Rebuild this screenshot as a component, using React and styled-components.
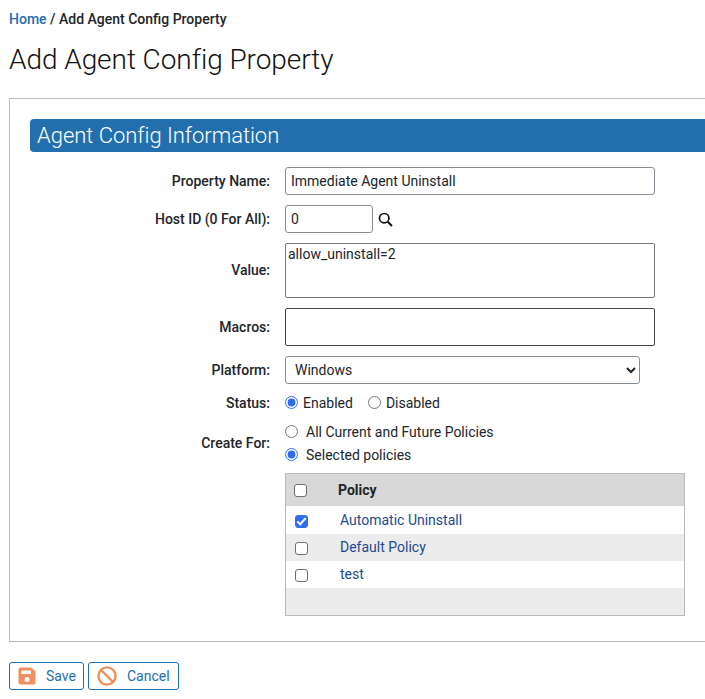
import React from "react";
import styled, { createGlobalStyle } from "styled-components";

const GlobalStyle = createGlobalStyle`
  html, body {
    margin: 0;
    padding: 0;
    overflow: hidden;
    background: #fff;
    color: #212529;
    font-family: Roboto, "Liberation Sans", sans-serif;
    font-size: 14px;
  }
`;

const Page = styled.div`
  width: 800px;
  height: 699px;
  padding: 0 0 0 9px;
  box-sizing: border-box;
`;

const Breadcrumb = styled.div`
  height: 19px;
  padding-top: 10px;
  line-height: 19px;
  font-size: 14px;
  font-weight: 500;
  color: #212529;
`;

const Crumb = styled.a`
  color: #236fad;
`;

const Title = styled.h1`
  margin: 0;
  padding-top: 11px;
  height: 40px;
  line-height: 40px;
  font-size: 28px;
  font-weight: 300;
  color: #111;
  letter-spacing: -0.06px;
`;

const Panel = styled.div`
  margin-top: 18px;
  height: 544px;
  box-sizing: border-box;
  border: 1px solid #bbb;
  padding: 20px 0 0 20px;
`;

const SectionHeader = styled.div`
  height: 33px;
  line-height: 33px;
  padding-left: 7px;
  background: #236fad;
  border-radius: 4px 0 0 4px;
  color: #fff;
  font-size: 22px;
  font-weight: 300;
  letter-spacing: -0.04px;
`;

const Row = styled.div`
  display: grid;
  grid-template-columns: 240px 1fr;
  column-gap: 15px;
  align-items: center;
  margin-top: ${(props) => props.$top || 10}px;
`;

const Label = styled.label`
  text-align: right;
  font-weight: 500;
  font-size: 14px;
  color: #212529;
  padding-bottom: ${(props) => props.$nudge || 0}px;
`;

const TextInput = styled.input`
  display: block;
  box-sizing: border-box;
  width: ${(props) => props.$width || 370}px;
  height: 28px;
  padding: 0 5px;
  border: 1px solid #868e96;
  border-radius: 3px;
  background: #fff;
  color: #212529;
  font: 400 14px Roboto, sans-serif;
`;

const InlineField = styled.div`
  display: flex;
  align-items: center;
  gap: 5px;
`;

const TextBox = styled.textarea`
  display: block;
  box-sizing: border-box;
  width: 370px;
  height: ${(props) => props.$height}px;
  padding: 2px;
  border: 1px solid ${(props) => props.$border};
  border-radius: 2px;
  resize: none;
  color: #212529;
  font: 400 14px/16px Roboto, sans-serif;
`;

const Select = styled.select`
  display: block;
  box-sizing: border-box;
  width: 355px;
  height: 28px;
  padding: 0 5px;
  border: 1px solid #868e96;
  border-radius: 3px;
  background-color: #fff;
  color: #212529;
  font: 400 14px Roboto, sans-serif;
`;

const RadioLine = styled.div`
  display: flex;
  align-items: center;
  height: 23px;
`;

const Radio = styled.input.attrs({ type: "radio" })`
  margin: 0 ${(props) => props.$gap || 5}px 0 0;
  width: 13px;
  height: 13px;
  accent-color: #2f6fed;
`;

const RadioText = styled.span`
  margin-right: ${(props) => props.$right || 0}px;
  font-size: 14px;
  color: #212529;
`;

const PolicyTable = styled.div`
  margin: 7px 0 0 255px;
  box-sizing: border-box;
  width: 400px;
  height: 143px;
  border: 1px solid #bbb;
  background: #ececec;
`;

const TableHead = styled.div`
  display: flex;
  align-items: center;
  height: 32px;
  padding-left: 8px;
  border-bottom: 1px solid #fff;
  background: #d8d8d8;
  font-weight: 700;
  font-size: 14px;
  color: #212529;
`;

const TableRow = styled.div`
  display: flex;
  align-items: center;
  height: 27px;
  padding-left: 9px;
  background: ${(props) => (props.$alt ? "#ececec" : "#fff")};
`;

const Check = styled.input.attrs({ type: "checkbox" })`
  appearance: none;
  position: relative;
  box-sizing: border-box;
  margin: 1px ${(props) => props.$gap}px 0 0;
  width: 13px;
  height: 13px;
  border: 1px solid #6f6f6f;
  border-radius: 3px;
  background: #fff;

  &:checked {
    border-color: #2f6fed;
    background: #2f6fed;
  }

  &:checked::after {
    content: "";
    position: absolute;
    left: 3px;
    top: 0;
    width: 3px;
    height: 7px;
    border: solid #fff;
    border-width: 0 2px 2px 0;
    transform: rotate(42deg);
  }
`;

const PolicyLink = styled.a`
  padding-bottom: 2px;
  color: #1d4a8c;
  font-size: 14px;
`;

const Actions = styled.div`
  display: flex;
  gap: 4px;
  margin-top: 20px;
`;

const Button = styled.button`
  display: flex;
  align-items: center;
  box-sizing: border-box;
  height: 28px;
  width: ${(props) => props.$width}px;
  padding: 0 0 0 ${(props) => props.$left}px;
  gap: ${(props) => props.$gap}px;
  border: 1px solid #236fad;
  border-radius: 3px;
  background: #fff;
  color: #236fad;
  font: 400 14px Roboto, sans-serif;
`;

const SearchIcon = () => (
  <svg width="15" height="15" viewBox="0 0 15 15" fill="none" stroke="#111" strokeWidth="1.7">
    <circle cx="6.2" cy="6.2" r="4.7" />
    <path d="M9.7 9.7 L14 14" strokeWidth="2" />
  </svg>
);

const SaveIcon = () => (
  <svg width="18" height="18" viewBox="0 0 18 18">
    <path
      fill="#f0905f"
      fillRule="evenodd"
      d="M2.5 0.5 H13.5 L17.5 4.5 V15.5 A2 2 0 0 1 15.5 17.5 H2.5 A2 2 0 0 1 0.5 15.5 V2.5 A2 2 0 0 1 2.5 0.5 Z M3.5 3.5 V7 H13 V3.5 Z M9 10 A2.5 2.5 0 1 0 9 15 A2.5 2.5 0 1 0 9 10 Z"
    />
  </svg>
);

const CancelIcon = () => (
  <svg width="20" height="20" viewBox="0 0 20 20" fill="none" stroke="#f0905f" strokeWidth="2.4">
    <circle cx="10" cy="10" r="8.6" />
    <path d="M4 4 L16 16" />
  </svg>
);

const policies = [
  { name: "Automatic Uninstall", checked: true },
  { name: "Default Policy", alt: true },
  { name: "test" },
];

const App = () => (
  <Page>
    <GlobalStyle />
    <Breadcrumb>
      <Crumb>Home</Crumb> / Add Agent Config Property
    </Breadcrumb>
    <Title>Add Agent Config Property</Title>
    <Panel>
      <SectionHeader>Agent Config Information</SectionHeader>
      <Row $top={15}>
        <Label>Property Name:</Label>
        <TextInput defaultValue="Immediate Agent Uninstall" />
      </Row>
      <Row>
        <Label>Host ID (0 For All):</Label>
        <InlineField>
          <TextInput $width={88} defaultValue="0" />
          <SearchIcon />
        </InlineField>
      </Row>
      <Row>
        <Label $nudge={2}>Value:</Label>
        <TextBox $height={55} $border="#767676" defaultValue="allow_uninstall=2" />
      </Row>
      <Row>
        <Label>Macros:</Label>
        <TextBox $height={38} $border="#444" />
      </Row>
      <Row>
        <Label>Platform:</Label>
        <Select defaultValue="Windows">
          <option>Windows</option>
        </Select>
      </Row>
      <Row $top={7}>
        <Label>Status:</Label>
        <RadioLine>
          <Radio name="status" defaultChecked />
          <RadioText $right={15}>Enabled</RadioText>
          <Radio name="status" />
          <RadioText>Disabled</RadioText>
        </RadioLine>
      </Row>
      <Row $top={6}>
        <Label>Create For:</Label>
        <div>
          <RadioLine>
            <Radio name="scope" $gap={8} />
            <RadioText>All Current and Future Policies</RadioText>
          </RadioLine>
          <RadioLine>
            <Radio name="scope" $gap={8} defaultChecked />
            <RadioText>Selected policies</RadioText>
          </RadioLine>
        </div>
      </Row>
      <PolicyTable>
        <TableHead>
          <Check $gap={31} />
          Policy
        </TableHead>
        {policies.map((policy) => (
          <TableRow key={policy.name} $alt={policy.alt}>
            <Check $gap={32} defaultChecked={policy.checked} />
            <PolicyLink>{policy.name}</PolicyLink>
          </TableRow>
        ))}
      </PolicyTable>
    </Panel>
    <Actions>
      <Button $width={75} $left={8} $gap={10}>
        <SaveIcon />
        Save
      </Button>
      <Button $width={91} $left={8} $gap={10}>
        <CancelIcon />
        Cancel
      </Button>
    </Actions>
  </Page>
);

export default App;
